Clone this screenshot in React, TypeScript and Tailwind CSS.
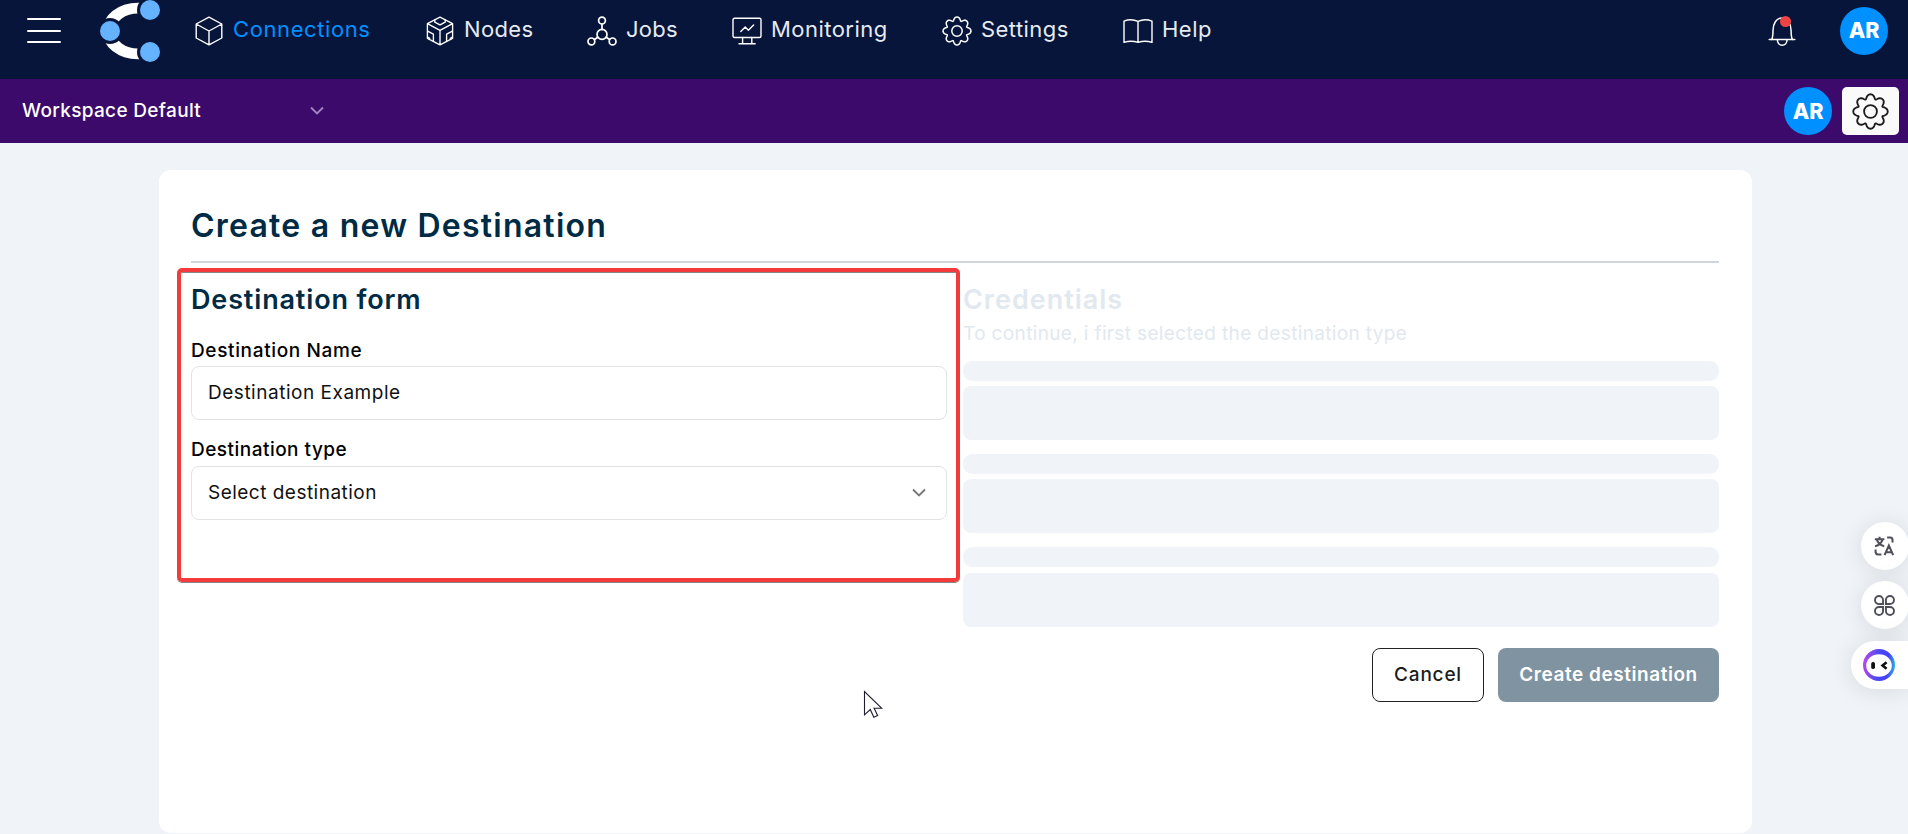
import type { ReactNode } from "react";

const gearPath = (() => {
  const points: string[] = [];
  for (let i = 0; i < 192; i++) {
    const t = (i / 192) * Math.PI * 2;
    const r = 12.35 + 1.75 * Math.cos(8 * t) - 0.15 * Math.cos(16 * t);
    const a = t + 0.03 * Math.sin(8 * t);
    points.push(`${(15 + r * Math.cos(a)).toFixed(2)} ${(15 + r * Math.sin(a)).toFixed(2)}`);
  }
  return `M${points.join("L")}Z`;
})();

function Icon({ children, width = 1.3 }: { children: ReactNode; width?: number }) {
  return (
    <svg
      viewBox="0 0 30 30"
      className="h-full w-full"
      fill="none"
      stroke="currentColor"
      strokeWidth={width}
      strokeLinejoin="round"
      strokeLinecap="round"
    >
      {children}
    </svg>
  );
}

const GearIcon = () => (
  <Icon width={1.5}>
    <path d={gearPath} />
    <circle cx="15" cy="15" r="5.2" />
  </Icon>
);

const CubeIcon = () => (
  <Icon width={1.4}>
    <path d="M15 1.2 27.8 8v14L15 28.8 2.2 22V8zM2.2 8 15 15l12.8-7M15 15v13.8" />
  </Icon>
);

const NodesIcon = () => (
  <Icon width={1.35}>
    <path d="M15 1.2 27.6 7.6v14.8L15 28.8 2.4 22.4V7.6zM2.4 7.6 15 14.4l12.6-6.8M15 14.4v14.4" />
    <path d="M9.8 4v2.200l5.200 2.700 5.200-2.700V4M2.600 15.200l5.800 3v7.200M27.400 15.200l-5.800 3v7.200" />
    <path d="M2.600 21.200l2.200 1.100M27.400 21.200l-2.200 1.100" />
  </Icon>
);

const JobsIcon = () => (
  <Icon width={1.7}>
    <circle cx="15" cy="4.6" r="3.4" />
    <circle cx="15" cy="18.4" r="5" />
    <circle cx="4.4" cy="25.4" r="3.4" />
    <circle cx="25.6" cy="25.4" r="3.4" />
    <path d="M15 8v5.4M10.8 21.2l-3.4 2.3M19.2 21.2l3.4 2.3" />
  </Icon>
);

const MonitorIcon = () => (
  <Icon width={1.4}>
    <rect x="1" y="2.3" width="28" height="19.2" rx="1.5" />
    <path d="M10.6 21.5v6.2M19.8 21.5v6.2M7 27.8h16.2M8.8 15.6l4.4-4.5 3.2 3.2 5.2-5.3" />
  </Icon>
);

const BookIcon = () => (
  <Icon width={1.4}>
    <path d="M15 5.4C10.600 3.400 5.400 3.400 1 5.200v21.200c4.400-1.500 9.600-1.500 14 0 4.400-1.500 9.600-1.500 14 0V5.200c-4.400-1.800-9.600-1.800-14 .2zM15 5.400v21" />
  </Icon>
);

const BellIcon = () => (
  <Icon width={1.5}>
    <path d="M2.200 23.600h25.600M4.600 23.600c1.400-2 1.400-5 1.400-9 0-7.200 3.600-12.700 9.100-12.700s9 5.500 9 12.700c0 4 0 7 1.400 9M10.400 24c0 3 2 5.200 4.800 5.200S20 27 20 24" />
  </Icon>
);

function Logo() {
  return (
    <svg viewBox="0 0 62 64" className="h-16 w-[62px]">
      <path fill="#fff" d="M40 2.700H38A36 28.300 0 0 0 38 59.300H40V48.600H38A23 17.600 0 0 1 38 13.400H40Z" />
      <g fill="#061539">
        <circle cx="50" cy="10" r="13" />
        <circle cx="10" cy="31" r="13" />
        <circle cx="50" cy="52" r="13" />
      </g>
      <g fill="#65b2ff">
        <circle cx="50" cy="10" r="10" />
        <circle cx="10" cy="31" r="10" />
        <circle cx="50" cy="52" r="10" />
      </g>
    </svg>
  );
}

function Chevron() {
  return (
    <svg viewBox="0 0 14 10" className="h-[10px] w-[14px]" fill="none" stroke="currentColor" strokeWidth="1.900">
      <path d="m1 1.500 6 6 6-6" />
    </svg>
  );
}

function NavItem({ icon, label, className }: { icon: ReactNode; label: string; className: string }) {
  return (
    <a className={`flex items-center ${className}`}>
      <span className="size-[30px] shrink-0 text-white">{icon}</span>
      <span className="ml-[9px] pb-[3px] text-[22px] leading-7">{label}</span>
    </a>
  );
}

function Avatar() {
  return (
    <div className="flex size-12 items-center justify-center rounded-full bg-[#0090ff] text-[21.500px] font-extrabold tracking-[-0.2px] text-white">
      AR
    </div>
  );
}

function Skeleton({ gap }: { gap: string }) {
  return (
    <div className={`flex flex-col ${gap}`}>
      <div className="h-5 rounded-[9px] bg-[#f0f4f9]" />
      <div className="h-[54px] rounded-lg bg-[#f0f4f9]" />
    </div>
  );
}

export default function App() {
  return (
    <div className="relative flex h-[834px] w-[1908px] flex-col overflow-hidden bg-[#f0f4f9] font-['Inter',sans-serif] text-black">
      <header className="flex h-[79px] items-start bg-[#061539] text-[#e6eaf1]">
        <div className="flex h-[61px] w-full items-center">
          <div className="ml-[27px] flex w-[34px] flex-col gap-[9.500px]">
            <span className="h-[2px] rounded bg-white" />
            <span className="h-[2px] rounded bg-white" />
            <span className="h-[2px] rounded bg-white" />
          </div>
          <div className="ml-[39px] h-[61px] w-[62px]">
            <Logo />
          </div>
          <nav className="ml-8 flex flex-1">
            <NavItem icon={<CubeIcon />} label="Connections" className="w-[231px] tracking-[0.600px] text-[#0090ff]" />
            <NavItem icon={<NodesIcon />} label="Nodes" className="w-[162px] tracking-[0.330px]" />
            <NavItem icon={<JobsIcon />} label="Jobs" className="w-[145px] tracking-[0.290px]" />
            <NavItem icon={<MonitorIcon />} label="Monitoring" className="w-[210px] tracking-[0.460px]" />
            <NavItem icon={<GearIcon />} label="Settings" className="w-[181px] tracking-[0.430px]" />
            <NavItem icon={<BookIcon />} label="Help" className="tracking-[0.500px]" />
          </nav>
          <div className="relative mr-[43px] size-[30px] text-white">
            <BellIcon />
            <span className="absolute top-0 left-[13px] size-[11px] rounded-full bg-[#ef4444]" />
          </div>
          <div className="mr-5">
            <Avatar />
          </div>
        </div>
      </header>

      <div className="flex h-16 items-center bg-[#3c0a6b] pr-[9px] pl-[22px] text-white">
        <div className="flex w-[302px] items-center justify-between">
          <span className="text-[19px] font-medium tracking-[0.330px]">Workspace Default</span>
          <span className="text-[#a584bd]">
            <Chevron />
          </span>
        </div>
        <div className="ml-auto flex items-center gap-[10px]">
          <Avatar />
          <button className="flex h-12 w-[57px] items-center justify-center rounded-[5px] bg-[#fafafa] text-[#1c1c1e]">
            <span className="size-[37px]">
              <GearIcon />
            </span>
          </button>
        </div>
      </div>

      <main className="mt-[27px] ml-[159px] flex h-[663px] w-[1593px] flex-col rounded-xl bg-white pr-[33px] pl-8">
        <h1 className="mt-8 border-b-2 border-[#cfd5da] pb-[11px] text-[32px] leading-[48px] font-semibold tracking-[1.230px] text-[#002b45]">
          Create a new Destination
        </h1>
        <div className="mt-[17px] grid grid-cols-2 gap-4">
          <section className="relative flex flex-col">
            <h2 className="text-[27px] leading-10 font-semibold tracking-[0.850px] text-[#002b45]">Destination form</h2>
            <label className="mt-[17px] mb-px text-[19px] leading-7 font-medium tracking-[0.650px]">Destination Name</label>
            <div className="flex h-[54px] items-center rounded-lg border border-[#e3e3e3] pl-4 text-[19px] tracking-[0.520px] text-[#111]">
              Destination Example
            </div>
            <label className="mt-4 mb-[2px] text-[19px] leading-7 font-medium tracking-[0.480px]">Destination type</label>
            <div className="flex h-[54px] items-center justify-between rounded-lg border border-[#e3e3e3] pr-5 pl-4 text-[19px] tracking-[0.480px] text-[#111]">
              Select destination
              <span className="text-[#777]">
                <Chevron />
              </span>
            </div>
            <div className="absolute -top-3 -left-[14px] h-[314px] w-[783px] rounded-[5px] border-4 border-[#f43b3b] shadow-[0_1px_0_#858585,inset_0_1px_0_#858585]" />
          </section>
          <section className="flex flex-col text-[#e2e8f0]">
            <h2 className="text-[27px] leading-10 font-semibold tracking-[0.970px]">Credentials</h2>
            <p className="text-[19px] leading-7 tracking-[0.360px]">To continue, i first selected the destination type</p>
            <div className="mt-[13px] flex flex-col gap-[14px]">
              <Skeleton gap="gap-[5px]" />
              <Skeleton gap="gap-[5px]" />
              <Skeleton gap="gap-[6px]" />
            </div>
          </section>
        </div>
        <div className="mt-[21px] flex justify-end gap-[14px] text-[19px]">
          <button className="h-[54px] w-28 rounded-lg border border-[#222] pt-px font-medium tracking-[0.800px] text-[#1c1c1e]">Cancel</button>
          <button className="h-[54px] w-[221px] rounded-lg bg-[#8093a0] pt-px font-semibold tracking-[0.550px] text-white">
            Create destination
          </button>
        </div>
      </main>

      <aside className="absolute top-[522px] right-0 flex flex-col items-end gap-[11px] text-[#4f4f59]">
        <div className="-mr-px flex size-12 items-center justify-center rounded-full bg-white shadow-[0_2px_24px_rgba(0,0,0,0.110)]">
          <svg viewBox="0 0 24 24" className="mr-[3px] size-[22px]" fill="none" stroke="currentColor" strokeWidth="2.200">
            <path d="M2 4.600h10.400M7.200 2v2.600M10.400 5c-.8 3.400-4 6.300-8.200 7.400M4.200 5c.8 3.400 4 6.300 8 7.200M15.400 2.600h3.200c1.700 0 2.700 1 2.700 2.700v3M2.800 15.800v2.600c0 1.900 1 2.900 2.900 2.900h3.500M12.600 22l4.700-10.500L22 22M14.200 18.900h6.200" />
          </svg>
        </div>
        <div className="-mr-px flex size-12 items-center justify-center rounded-full bg-white shadow-[0_2px_24px_rgba(0,0,0,0.110)]">
          <svg viewBox="0 0 24 24" className="mr-px size-[23px]" fill="none" stroke="currentColor" strokeWidth="2">
            <path d="M10.500 10.500H6.900a4.200 4.200 0 1 1 3.600-4.200zM13.500 10.500V6.300a4.200 4.200 0 1 1 4.200 4.200zM10.500 13.500v4.200a4.200 4.200 0 1 1-4.200-4.200zM13.500 13.500h4.200a4.200 4.200 0 1 1-4.200 4.200z" />
          </svg>
        </div>
        <div className="mt-px flex h-12 w-[57px] items-center rounded-l-full bg-white pl-3 shadow-[0_2px_24px_rgba(0,0,0,0.110)]">
          <svg viewBox="0 0 32 32" className="size-8">
            <defs>
              <linearGradient id="ring" x1="0" y1="0.700" x2="1" y2="0.800">
                <stop offset="0" stopColor="#b04be8" />
                <stop offset="0.450" stopColor="#4a48f5" />
                <stop offset="0.750" stopColor="#4540f8" />
                <stop offset="1" stopColor="#26c4dc" />
              </linearGradient>
            </defs>
            <circle cx="16" cy="16" r="16" fill="url(#ring)" />
            <ellipse cx="16" cy="16.500" rx="12.800" ry="11.300" fill="#fff" />
            <rect x="8.200" y="13" width="3.800" height="7" rx="1.700" fill="#111" />
            <path d="m23.600 13.300-4 3.200 4 3.200" fill="none" stroke="#111" strokeWidth="2.600" />
          </svg>
        </div>
      </aside>

      <svg viewBox="0 0 20 29" className="absolute top-[690px] left-[863px] h-[29px] w-5">
        <path
          d="M1.500 1.500v23.300l5.800-5.300 3.500 7.800 3.800-1.700-3.500-7.300h7.700z"
          fill="#fff"
          stroke="#1d1d2b"
          strokeWidth="1.100"
        />
      </svg>
    </div>
  );
}
